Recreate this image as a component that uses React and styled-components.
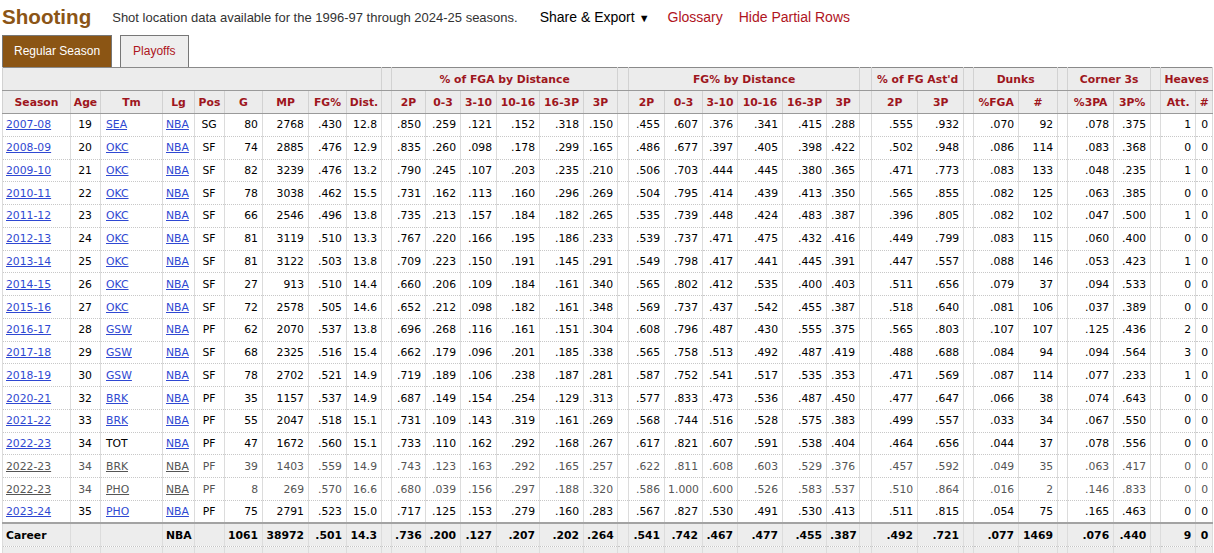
import React from 'react';
import styled, { createGlobalStyle } from 'styled-components';

const GlobalStyle = createGlobalStyle`
  html, body { margin: 0; padding: 0; background: #fff; }
  body { font-family: "Liberation Sans", Arial, sans-serif; color: #000; }
`;

const WIDTHS = [68,30,62,32,30,38,46,38,35,10,34,35,36,43,44,34,11,36,38,35,45,44,33,12,46,46,10,45,39,10,46,37,10,35,17];

const BASIC = ['Season','Age','Tm','Lg','Pos','G','MP','FG%','Dist.'];
const BASIC_ALIGN = ['left','center','left','left','center','right','right','right','right'];
const GROUPS = [
  { title: '% of FGA by Distance', cols: ['2P','0-3','3-10','10-16','16-3P','3P'] },
  { title: 'FG% by Distance', cols: ['2P','0-3','3-10','10-16','16-3P','3P'] },
  { title: "% of FG Ast'd", cols: ['2P','3P'] },
  { title: 'Dunks', cols: ['%FGA','#'] },
  { title: 'Corner 3s', cols: ['%3PA','3P%'] },
  { title: 'Heaves', cols: ['Att.','#'] },
];

const RAW = [
  '2007-08 19 SEA NBA SG 80 2768 .430 12.8 .850 .259 .121 .152 .318 .150 .455 .607 .376 .341 .415 .288 .555 .932 .070 92 .078 .375 1 0',
  '2008-09 20 OKC NBA SF 74 2885 .476 12.9 .835 .260 .098 .178 .299 .165 .486 .677 .397 .405 .398 .422 .502 .948 .086 114 .083 .368 0 0',
  '2009-10 21 OKC NBA SF 82 3239 .476 13.2 .790 .245 .107 .203 .235 .210 .506 .703 .444 .445 .380 .365 .471 .773 .083 133 .048 .235 1 0',
  '2010-11 22 OKC NBA SF 78 3038 .462 15.5 .731 .162 .113 .160 .296 .269 .504 .795 .414 .439 .413 .350 .565 .855 .082 125 .063 .385 0 0',
  '2011-12 23 OKC NBA SF 66 2546 .496 13.8 .735 .213 .157 .184 .182 .265 .535 .739 .448 .424 .483 .387 .396 .805 .082 102 .047 .500 1 0',
  '2012-13 24 OKC NBA SF 81 3119 .510 13.3 .767 .220 .166 .195 .186 .233 .539 .737 .471 .475 .432 .416 .449 .799 .083 115 .060 .400 0 0',
  '2013-14 25 OKC NBA SF 81 3122 .503 13.8 .709 .223 .150 .191 .145 .291 .549 .798 .417 .441 .445 .391 .447 .557 .088 146 .053 .423 1 0',
  '2014-15 26 OKC NBA SF 27 913 .510 14.4 .660 .206 .109 .184 .161 .340 .565 .802 .412 .535 .400 .403 .511 .656 .079 37 .094 .533 0 0',
  '2015-16 27 OKC NBA SF 72 2578 .505 14.6 .652 .212 .098 .182 .161 .348 .569 .737 .437 .542 .455 .387 .518 .640 .081 106 .037 .389 0 0',
  '2016-17 28 GSW NBA PF 62 2070 .537 13.8 .696 .268 .116 .161 .151 .304 .608 .796 .487 .430 .555 .375 .565 .803 .107 107 .125 .436 2 0',
  '2017-18 29 GSW NBA SF 68 2325 .516 15.4 .662 .179 .096 .201 .185 .338 .565 .758 .513 .492 .487 .419 .488 .688 .084 94 .094 .564 3 0',
  '2018-19 30 GSW NBA SF 78 2702 .521 14.9 .719 .189 .106 .238 .187 .281 .587 .752 .541 .517 .535 .353 .471 .569 .087 114 .077 .233 1 0',
  '2020-21 32 BRK NBA PF 35 1157 .537 14.9 .687 .149 .154 .254 .129 .313 .577 .833 .473 .536 .487 .450 .477 .647 .066 38 .074 .643 0 0',
  '2021-22 33 BRK NBA PF 55 2047 .518 15.1 .731 .109 .143 .319 .161 .269 .568 .744 .516 .528 .575 .383 .499 .557 .033 34 .067 .550 0 0',
  '2022-23 34 TOT NBA PF 47 1672 .560 15.1 .733 .110 .162 .292 .168 .267 .617 .821 .607 .591 .538 .404 .464 .656 .044 37 .078 .556 0 0',
  '2022-23 34 BRK NBA PF 39 1403 .559 14.9 .743 .123 .163 .292 .165 .257 .622 .811 .608 .603 .529 .376 .457 .592 .049 35 .063 .417 0 0 P',
  '2022-23 34 PHO NBA PF 8 269 .570 16.6 .680 .039 .156 .297 .188 .320 .586 1.000 .600 .526 .583 .537 .510 .864 .016 2 .146 .833 0 0 P',
  '2023-24 35 PHO NBA PF 75 2791 .523 15.0 .717 .125 .153 .279 .160 .283 .567 .827 .530 .491 .530 .413 .511 .815 .054 75 .165 .463 0 0',
];

const ROWS = RAW.map((line) => {
  const parts = line.split(' ');
  const partial = parts[parts.length - 1] === 'P';
  return { values: partial ? parts.slice(0, -1) : parts, partial };
});

const CAREER = ['Career','','','NBA','','1061','38972','.501','14.3',
  '.736','.200','.127','.207','.202','.264',
  '.541','.742','.467','.477','.455','.387',
  '.492','.721','.077','1469','.076','.440','9','0'];

const Page = styled.div`
  padding: 0 0 0 2px;
  width: 1212px;
`;

const TopBar = styled.div`
  display: flex;
  align-items: center;
  height: 35px;
  padding-bottom: 1px;
  box-sizing: border-box;
  white-space: nowrap;
`;

const Title = styled.h2`
  margin: 0;
  font-size: 20.6px;
  font-weight: bold;
  color: #8b5516;
`;

const Note = styled.span`
  margin-left: 21px;
  font-size: 13px;
  color: #333;
`;

const MenuButton = styled.span`
  margin-left: 22px;
  font-size: 14px;
  color: #000;
`;

const Caret = styled.span`
  margin-left: 4px;
  font-size: 11px;
`;

const MenuLink = styled.a`
  margin-left: ${(p) => p.$gap}px;
  font-size: 14px;
  color: #b0141e;
  text-decoration: none;
`;

const Tabs = styled.div`
  display: flex;
  gap: 8px;
  height: 32px;
`;

const Tab = styled.div`
  box-sizing: border-box;
  height: 32px;
  padding: 0 ${(p) => p.$pad}px;
  border: 1px solid #777;
  border-bottom: none;
  line-height: 31px;
  font-size: 12px;
  background: ${(p) => (p.$active ? '#8b5514' : '#eeeeee')};
  color: ${(p) => (p.$active ? '#fff' : '#ad1521')};
`;

const Table = styled.table`
  border-collapse: collapse;
  table-layout: fixed;
  width: 1211px;
  border: 1px solid #8a8a8a;
  font-family: "DejaVu Sans", Verdana, sans-serif;
  font-size: 10.8px;
`;

const HeadRow = styled.tr`
  height: 23px;
`;

const Th = styled.th`
  background: #ececec;
  color: #9e161d;
  font-weight: bold;
  text-align: center;
  padding: 0 2px;
  white-space: nowrap;
  overflow: hidden;
  border-left: 1px solid #d2d2d2;
  border-right: 1px solid #d2d2d2;
  border-bottom: 1px solid #9a9a9a;
`;

const BodyRow = styled.tr`
  height: 22.78px;
  color: ${(p) => (p.$partial ? '#555' : '#000')};
`;

const Td = styled.td`
  text-align: ${(p) => p.$align || 'right'};
  padding: ${(p) => (p.$indent ? '0 3px 0 5px' : '0 4px 0 3px')};
  white-space: nowrap;
  overflow: hidden;
  border-left: 1px solid #dcdcdc;
  border-right: 1px solid #dcdcdc;
  border-top: 1px dotted #c8c8c8;
`;

const FootRow = styled.tr`
  height: 23px;
  background: #ededed;
  font-weight: bold;
  & > td {
    border-top: ${(p) => (p.$first ? '2px solid #a3a3a3' : '1px dotted #c4c4c4')};
  }
`;

const CellLink = styled.a`
  color: ${(p) => (p.$muted ? '#555' : '#2f48d2')};
  text-decoration: underline;
`;

function renderBasic(values, partial) {
  return BASIC.map((_, i) => {
    const v = values[i];
    let content = v;
    if (i === 0 || i === 3 || (i === 2 && v !== 'TOT')) {
      content = <CellLink href="#" $muted={partial}>{v}</CellLink>;
    }
    return (
      <Td key={`b${i}`} $align={BASIC_ALIGN[i]} $indent={i === 2}>
        {content}
      </Td>
    );
  });
}

function renderGroups(values, keyPrefix) {
  const cells = [];
  let idx = 9;
  GROUPS.forEach((g, gi) => {
    cells.push(<Td key={`${keyPrefix}s${gi}`} />);
    g.cols.forEach((_, ci) => {
      cells.push(<Td key={`${keyPrefix}g${gi}-${ci}`}>{values[idx]}</Td>);
      idx += 1;
    });
  });
  return cells;
}

export default function App() {
  return (
    <Page>
      <GlobalStyle />
      <TopBar>
        <Title>Shooting</Title>
        <Note>Shot location data available for the 1996-97 through 2024-25 seasons.</Note>
        <MenuButton>
          Share &amp; Export<Caret>▼</Caret>
        </MenuButton>
        <MenuLink href="#" $gap={18}>Glossary</MenuLink>
        <MenuLink href="#" $gap={16}>Hide Partial Rows</MenuLink>
      </TopBar>
      <Tabs>
        <Tab $active $pad={11}>Regular Season</Tab>
        <Tab $pad={12}>Playoffs</Tab>
      </Tabs>
      <Table>
        <colgroup>
          {WIDTHS.map((w, i) => (
            <col key={i} style={{ width: `${w}px` }} />
          ))}
        </colgroup>
        <thead>
          <HeadRow>
            <Th colSpan={9} />
            {GROUPS.map((g, gi) => (
              <React.Fragment key={gi}>
                <Th />
                <Th colSpan={g.cols.length}>{g.title}</Th>
              </React.Fragment>
            ))}
          </HeadRow>
          <HeadRow>
            {BASIC.map((h) => (
              <Th key={h}>{h}</Th>
            ))}
            {GROUPS.map((g, gi) => (
              <React.Fragment key={gi}>
                <Th />
                {g.cols.map((c, ci) => (
                  <Th key={ci}>{c}</Th>
                ))}
              </React.Fragment>
            ))}
          </HeadRow>
        </thead>
        <tbody>
          {ROWS.map((r, ri) => (
            <BodyRow key={ri} $partial={r.partial}>
              {renderBasic(r.values, r.partial)}
              {renderGroups(r.values, `r${ri}`)}
            </BodyRow>
          ))}
        </tbody>
        <tfoot>
          <FootRow $first>
            {BASIC.map((_, i) => (
              <Td key={i} $align={i === 0 || i === 3 ? 'left' : 'right'}>
                {CAREER[i]}
              </Td>
            ))}
            {renderGroups(CAREER, 'c')}
          </FootRow>
          <FootRow>
            {WIDTHS.map((_, i) => (
              <Td key={i} />
            ))}
          </FootRow>
        </tfoot>
      </Table>
    </Page>
  );
}
